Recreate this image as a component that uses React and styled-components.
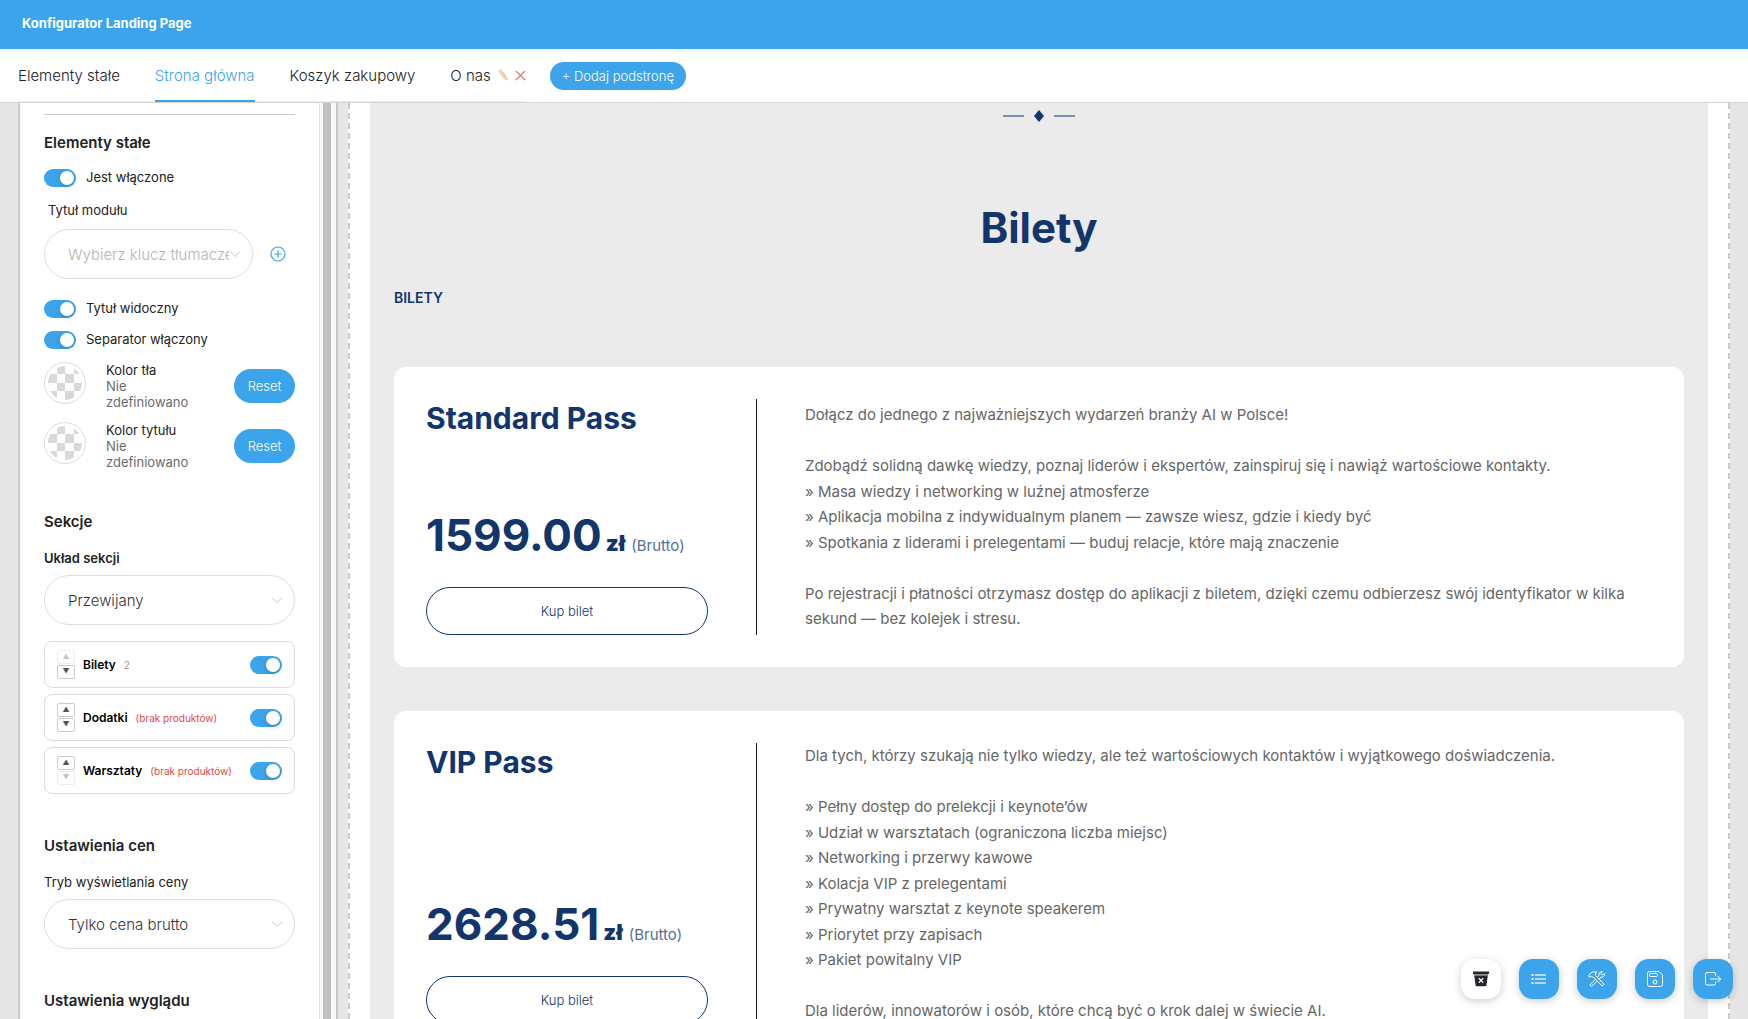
import React from 'react'
import styled, { createGlobalStyle, css } from 'styled-components'

const card1 = `Dołącz do jednego z najważniejszych wydarzeń branży AI w Polsce!

Zdobądź solidną dawkę wiedzy, poznaj liderów i ekspertów, zainspiruj się i nawiąż wartościowe kontakty.
» Masa wiedzy i networking w luźnej atmosferze
» Aplikacja mobilna z indywidualnym planem — zawsze wiesz, gdzie i kiedy być
» Spotkania z liderami i prelegentami — buduj relacje, które mają znaczenie

Po rejestracji i płatności otrzymasz dostęp do aplikacji z biletem, dzięki czemu odbierzesz swój identyfikator w kilka sekund — bez kolejek i stresu.`

const card2 = `Dla tych, którzy szukają nie tylko wiedzy, ale też wartościowych kontaktów i wyjątkowego doświadczenia.

» Pełny dostęp do prelekcji i keynote’ów
» Udział w warsztatach (ograniczona liczba miejsc)
» Networking i przerwy kawowe
» Kolacja VIP z prelegentami
» Prywatny warsztat z keynote speakerem
» Priorytet przy zapisach
» Pakiet powitalny VIP

Dla liderów, innowatorów i osób, które chcą być o krok dalej w świecie AI.`

const tickets = [
    { name: 'Standard Pass', price: '1599.00', text: card1 },
    { name: 'VIP Pass', price: '2628.51', text: card2 },
]

function Switch({ id, label }) {
    const [on, setOn] = React.useState(true)
    return <Toggle type="checkbox" role="switch" id={id} aria-label={label} checked={on} onChange={() => setOn(!on)} />
}

function SwitchRow({ id, label }) {
    return (
        <ToggleRow>
            <Switch id={id} />
            <label htmlFor={id}>{label}</label>
        </ToggleRow>
    )
}

function Dropdown({ id, value, muted }) {
    return (
        <SelectBox $muted={muted}>
            <select id={id} defaultValue={value}>
                <option>{value}</option>
            </select>
            <svg viewBox="0 0 12 8" fill="none" stroke="currentColor"><path d="M1 1.5l5 5 5-5" /></svg>
        </SelectBox>
    )
}

function ColorField({ label }) {
    return (
        <ColorRow>
            <Swatch type="button" aria-label={label}>
                <svg viewBox="0 0 34 34">
                    <defs>
                        <clipPath id="round"><circle cx="17" cy="17" r="17" /></clipPath>
                    </defs>
                    <g clipPath="url(#round)" fill="#d9d9d9">
                        <path d="M9 0h8v8H9zM26 0h8v8h-8zM0 8h9v9H0zM17 8h9v9h-9zM9 17h8v8H9zM26 17h8v8h-8zM0 25h9v9H0zM17 25h9v9h-9z" />
                    </g>
                </svg>
            </Swatch>
            <ColorText>
                {label}
                <span>Nie zdefiniowano</span>
            </ColorText>
            <ResetButton type="button">Reset</ResetButton>
        </ColorRow>
    )
}

function SectionRow({ name, note, error, first, last }) {
    return (
        <SortItem>
            <Arrows>
                <button type="button" disabled={first} aria-label="W górę">▲</button>
                <button type="button" disabled={last} aria-label="W dół">▼</button>
            </Arrows>
            <SortName>{name}</SortName>
            <SortNote $error={error}>{note}</SortNote>
            <Switch label={name} />
        </SortItem>
    )
}

export default function App() {
    return (
        <Page>
            <GlobalStyle />
            <Header>Konfigurator Landing Page</Header>
            <Nav>
                <TabList>
                    <Tab href="#stale">Elementy stałe</Tab>
                    <Tab href="#glowna" $active>Strona główna</Tab>
                    <Tab href="#koszyk">Koszyk zakupowy</Tab>
                    <TabGroup>
                        <Tab href="#onas">O nas</Tab>
                        <TabAction type="button" aria-label="Edytuj">
                            <svg width="10" height="12" viewBox="0 0 10 12" fill="#fbe3cc" stroke="#efb98c" strokeWidth=".8">
                                <path d="M.8 1.8L2.6.6 8.6 8l.6 3.2L6.4 9.6zM2.2 2.8l5 6.2M3.4 1.8l4.8 6.4" />
                            </svg>
                        </TabAction>
                        <TabAction type="button" aria-label="Usuń">
                            <svg width="11" height="11" viewBox="0 0 11 11" stroke="#e0675c" strokeWidth="1.2"><path d="M.8.8l9.4 9.4M10.2.8L.8 10.2" /></svg>
                        </TabAction>
                    </TabGroup>
                </TabList>
                <AddButton type="button">+ Dodaj podstronę</AddButton>
            </Nav>
            <Workspace>
                <Sidebar>
                    <Panel>
                        <Group>
                            <GroupTitle>Elementy stałe</GroupTitle>
                            <SwitchRow id="enabled" label="Jest włączone" />
                            <FieldLabel htmlFor="title" $inset>Tytuł modułu</FieldLabel>
                            <KeyRow>
                                <Dropdown id="title" value="Wybierz klucz tłumaczenia" muted />
                                <PlusButton type="button" aria-label="Dodaj klucz">
                                    <svg width="16" height="16" viewBox="0 0 16 16" fill="none" stroke="currentColor" strokeWidth="1.2"><circle cx="8" cy="8" r="7" /><path d="M8 4.5v7M4.5 8h7" /></svg>
                                </PlusButton>
                            </KeyRow>
                            <SwitchRow id="visible" label="Tytuł widoczny" />
                            <SwitchRow id="separator" label="Separator włączony" />
                            <ColorList>
                                <ColorField label="Kolor tła" />
                                <ColorField label="Kolor tytułu" />
                            </ColorList>
                        </Group>
                        <Group>
                            <GroupTitle>Sekcje</GroupTitle>
                            <FieldLabel htmlFor="layout" $bold>Układ sekcji</FieldLabel>
                            <Dropdown id="layout" value="Przewijany" />
                            <SortList>
                                <SectionRow name="Bilety" note="2" first />
                                <SectionRow name="Dodatki" note="(brak produktów)" error />
                                <SectionRow name="Warsztaty" note="(brak produktów)" error last />
                            </SortList>
                        </Group>
                        <Group>
                            <GroupTitle>Ustawienia cen</GroupTitle>
                            <FieldLabel htmlFor="price">Tryb wyświetlania ceny</FieldLabel>
                            <Dropdown id="price" value="Tylko cena brutto" />
                        </Group>
                        <Group>
                            <GroupTitle>Ustawienia wyglądu</GroupTitle>
                        </Group>
                    </Panel>
                    <Scrollbar><i /></Scrollbar>
                </Sidebar>
                <Preview>
                    <Module>
                        <Separator width="72" height="12" viewBox="0 0 72 12">
                            <path d="M0 6h21M51 6h21" stroke="#7b91b0" strokeWidth="2" />
                            <path d="M36 0l5 6-5 6-5-6z" fill="#12356b" />
                        </Separator>
                        <ModuleTitle>Bilety</ModuleTitle>
                        <SectionTitle>BILETY</SectionTitle>
                        {tickets.map((t) => (
                            <Ticket key={t.name}>
                                <TicketSide>
                                    <TicketName>{t.name}</TicketName>
                                    <div>
                                        <Price>{t.price}<b>zł</b><small>(Brutto)</small></Price>
                                        <BuyButton type="button">Kup bilet</BuyButton>
                                    </div>
                                </TicketSide>
                                <TicketText>{t.text}</TicketText>
                            </Ticket>
                        ))}
                    </Module>
                </Preview>
            </Workspace>
            <Dock>
                <DockButton type="button" aria-label="Archiwum" $light>
                    <svg width="16" height="16" viewBox="0 0 16 16">
                        <path d="M0 .5h16V3H0z" fill="#24282d" />
                        <path d="M1 3h14v1.5H1z" fill="#8d9093" />
                        <path d="M1.2 4.5h13.6l-1.4 10a1 1 0 0 1-1 .8H3.6a1 1 0 0 1-1-.8z" fill="#24282d" />
                        <path d="M5.8 7.2l4.4 4.4M10.2 7.2l-4.4 4.4" stroke="#fff" strokeWidth="1.3" />
                    </svg>
                </DockButton>
                <DockButton type="button" aria-label="Lista">
                    <svg width="16" height="16" viewBox="0 0 16 16" fill="none" stroke="currentColor">
                        <path d="M4 4h11M4 8h11M4 12h11" strokeWidth="1.3" opacity=".8" />
                        <path d="M.5 4h2M.5 8h2M.5 12h2" strokeWidth="2" />
                    </svg>
                </DockButton>
                <DockButton type="button" aria-label="Narzędzia">
                    <svg width="18" height="18" viewBox="0 0 18 18" fill="none" stroke="currentColor" strokeLinejoin="round">
                        <path d="M1 7L.8 5 4 2h5L7.2 4l.6 1.6 8.2 8.6-1.8 1.9L6 7.6 4.4 7 3.2 5.8 2.4 7z" />
                        <path d="M9.6 7.2L11 5.6c-.5-2 .8-4 3.2-4.2l-1.4 2L14.400 5l2.200-1.400c.4 2.400-1.600 4-3.800 3.600L11.400 9" />
                        <path d="M7.400 9.400l-5 4.800c-.8 1 .6 2.600 1.800 1.800L9 11.200" />
                    </svg>
                </DockButton>
                <DockButton type="button" aria-label="Zapisz">
                    <svg width="16" height="16" viewBox="0 0 16 16" fill="none" stroke="currentColor">
                        <path d="M2.5.5H12L15.500 4v9.500a2 2 0 0 1-2 2h-11a2 2 0 0 1-2-2v-11a2 2 0 0 1 2-2z" />
                        <rect x="2.5" y="2.5" width="8" height="3" rx="1" />
                        <circle cx="8" cy="11" r="2" />
                    </svg>
                </DockButton>
                <DockButton type="button" aria-label="Wyjdź">
                    <svg width="18" height="16" viewBox="0 0 18 16" fill="none" stroke="currentColor">
                        <path d="M11.5 5V3A1.500 1.500 0 0 0 10 1.500H3A1.500 1.500 0 0 0 1.500 3v9.500A1.500 1.500 0 0 0 3 14h7a1.500 1.500 0 0 0 1.500-1.500v-2M6 8h10.500M13.500 4.800L16.700 8l-3.200 3.200" />
                    </svg>
                </DockButton>
            </Dock>
        </Page>
    )
}

const GlobalStyle = createGlobalStyle`
    * {
        box-sizing: border-box;
    }
    body {
        margin: 0;
        background: #e6e6e6;
        color: #222;
        font-family: "Inter", sans-serif;
        font-size: 14px;
    }
    button, select, input {
        font: inherit;
        margin: 0;
    }
    button {
        padding: 0;
        border: none;
        background: none;
        cursor: pointer;
    }
    a {
        color: inherit;
        text-decoration: none;
    }
    h1, h2, h3, p {
        margin: 0;
    }
`;

const Page = styled.div`
    height: 100vh;
    display: flex;
    flex-direction: column;
    overflow: hidden;
`;

const Header = styled.header`
    height: 49px;
    padding: 14px 22px;
    flex-shrink: 0;
    background: #3ca4eb;
    color: #fff;
    font-weight: 700;
    font-size: 13px;
    line-height: 18px;
`;

const Nav = styled.nav`
    display: flex;
    align-items: center;
    gap: 24px;
    height: 54px;
    padding: 0 18px;
    flex-shrink: 0;
    background: #fff;
    border-bottom: 1px solid #d4d4d4;
`;

const TabList = styled.div`
    display: flex;
    align-self: stretch;
    gap: 35px;
    border-bottom: 1px solid #ececec;
`;

const Tab = styled.a`
    display: flex;
    align-items: center;
    height: 53px;
    padding-top: 2px;
    border-bottom: 2px solid transparent;
    font-size: 15px;
    font-weight: 300;
    ${({ $active }) => $active && css`
        color: #3ca4eb;
        border-color: #3ca4eb;
    `}
`;

const TabGroup = styled.div`
    display: flex;
    align-items: center;
    gap: 7px;
`;

const TabAction = styled.button`
    display: flex;
`;

const AddButton = styled.button`
    height: 28px;
    padding: 0 12px;
    border-radius: 14px;
    background: #3ca4eb;
    color: #fff;
    font-size: 13px;
    font-weight: 300;
`;

const Workspace = styled.div`
    flex: 1;
    min-height: 0;
    display: flex;
    gap: 10px;
    padding: 0 18px;
`;

const Sidebar = styled.aside`
    width: 320px;
    flex-shrink: 0;
    display: flex;
    border: solid #c8c8c8;
    border-width: 0 2px;
    background: #fff;
    overflow: hidden;
`;

const Panel = styled.div`
    flex: 1;
    min-width: 0;
    height: max-content;
    margin: 11px 24px 0;
    border-top: 1px solid #c8c8c8;
`;

const Scrollbar = styled.div`
    width: 17px;
    padding: 0 5px 0 3px;
    border-left: 1px solid #e4e4e4;
    background: #fafafa;
    i {
        display: block;
        height: 100%;
        background: #c0c0c0;
    }
`;

const Group = styled.section`
    padding: 16px 0 24px;
`;

const GroupTitle = styled.h2`
    margin-bottom: 14px;
    font-size: 15px;
    line-height: 24px;
    font-weight: 600;
`;

const ToggleRow = styled.div`
    display: flex;
    gap: 10px;
    height: 18px;
    margin-bottom: 13px;
    font-size: 13px;
    line-height: 16px;
`;

const Toggle = styled.input`
    appearance: none;
    width: 32px;
    height: 18px;
    padding: 2px;
    flex-shrink: 0;
    border-radius: 9px;
    background: #bbb;
    cursor: pointer;
    &::before {
        content: '';
        display: block;
        width: 14px;
        height: 14px;
        border-radius: 50%;
        background: #fff;
        box-shadow: 0 2px 4px rgba(0, 35, 11, 0.2);
    }
    &:checked {
        background: #3ca4eb;
    }
    &:checked::before {
        margin-left: auto;
    }
`;

const FieldLabel = styled.label`
    display: block;
    margin-bottom: 7px;
    padding-left: ${({ $inset }) => ($inset ? '4px' : '0')};
    font-size: 13px;
    line-height: 20px;
    font-weight: ${({ $bold }) => ($bold ? 600 : 400)};
`;

const KeyRow = styled.div`
    display: flex;
    align-items: center;
    gap: 17px;
    margin: 9px 0 21px;
`;

const PlusButton = styled.button`
    display: flex;
    margin-right: 9px;
    color: #3ca4eb;
`;

const SelectBox = styled.div`
    position: relative;
    flex: 1;
    min-width: 0;
    select {
        appearance: none;
        display: block;
        width: 100%;
        height: 50px;
        padding: 0 23px;
        border: 1px solid #dcdce4;
        border-radius: 25px;
        background: #fff;
        color: ${({ $muted }) => ($muted ? '#b4b4b4' : '#333')};
        font-size: 15px;
        font-weight: 300;
    }
    svg {
        position: absolute;
        right: 12px;
        top: 21px;
        width: 12px;
        height: 8px;
        color: #c4c4c4;
        pointer-events: none;
    }
`;

const ColorList = styled.div`
    display: grid;
    grid-auto-rows: 48px;
    gap: 12px;
`;

const ColorRow = styled.div`
    display: flex;
`;

const Swatch = styled.button`
    display: grid;
    place-items: center;
    width: 42px;
    height: 42px;
    flex-shrink: 0;
    border: 1px solid #dcdce4;
    border-radius: 50%;
    svg {
        width: 34px;
        height: 34px;
    }
`;

const ColorText = styled.div`
    flex: 1;
    padding: 0 36px 0 20px;
    font-size: 13px;
    line-height: 16px;
    span {
        display: block;
        color: #6b6b6b;
    }
`;

const ResetButton = styled.button`
    width: 61px;
    height: 34px;
    margin-top: 7px;
    border-radius: 17px;
    background: #3ca4eb;
    color: #fff;
    font-size: 13px;
    font-weight: 300;
`;

const SortList = styled.div`
    display: grid;
    gap: 6px;
    margin-top: 16px;
`;

const SortItem = styled.div`
    display: flex;
    align-items: center;
    height: 47px;
    padding: 0 12px;
    border: 1px solid #dcdcdc;
    border-radius: 8px;
    input {
        margin-left: auto;
    }
`;

const Arrows = styled.div`
    display: grid;
    gap: 1px;
    margin-right: 8px;
    button {
        width: 18px;
        height: 14px;
        border: 1px solid #ccc;
        border-radius: 2px;
        color: #555;
        font-size: 7px;
        line-height: 10px;
    }
    button:disabled {
        opacity: 0.35;
    }
`;

const SortName = styled.strong`
    color: #000;
    font-size: 12px;
    font-weight: 600;
`;

const SortNote = styled.span`
    margin-left: 8px;
    font-size: 10px;
    color: ${({ $error }) => ($error ? '#dc4a42' : '#999')};
`;

const Preview = styled.main`
    flex: 1;
    min-width: 0;
    padding: 0 20px;
    border: dashed #ccc;
    border-width: 0 2px;
    background: #fff;
`;

const Module = styled.div`
    display: flex;
    flex-direction: column;
    padding: 7px 24px 0;
    background: #ebebeb;
    color: #12356b;
`;

const Separator = styled.svg`
    align-self: center;
`;

const ModuleTitle = styled.h1`
    margin: 78px 0 32px;
    text-align: center;
    font-size: 42px;
    line-height: 56px;
    font-weight: 700;
`;

const SectionTitle = styled.h2`
    margin-bottom: 59px;
    font-size: 14px;
    line-height: 20px;
    font-weight: 600;
`;

const Ticket = styled.article`
    display: grid;
    grid-template-columns: 331px 1fr;
    margin-bottom: 44px;
    padding: 32px;
    border-radius: 12px;
    background: #fff;
`;

const TicketSide = styled.div`
    display: flex;
    flex-direction: column;
    justify-content: space-between;
    min-height: 236px;
    padding-right: 48px;
    border-right: 1px solid #1c1c1c;
`;

const TicketName = styled.h3`
    font-size: 30px;
    line-height: 38px;
    font-weight: 700;
`;

const Price = styled.p`
    margin-bottom: 16px;
    font-size: 44px;
    line-height: 50px;
    font-weight: 700;
    white-space: nowrap;
    b {
        margin: 0 6px 0 4px;
        font-size: 22px;
    }
    small {
        color: #556f99;
        font-size: 15px;
        font-weight: 400;
    }
`;

const BuyButton = styled.button`
    display: block;
    width: 100%;
    height: 48px;
    border: 1px solid #12356b;
    border-radius: 24px;
    color: #12356b;
    font-size: 13px;
    font-weight: 300;
`;

const TicketText = styled.p`
    align-self: center;
    padding-left: 48px;
    color: #666;
    font-size: 15px;
    line-height: 1.7;
    white-space: pre-line;
`;

const Dock = styled.div`
    position: fixed;
    right: 15px;
    bottom: 20px;
    display: flex;
    gap: 18px;
`;

const DockButton = styled.button`
    display: grid;
    place-items: center;
    width: 40px;
    height: 40px;
    border-radius: 14px;
    background: ${({ $light }) => ($light ? '#fff' : '#3ca4eb')};
    color: #fff;
    box-shadow: 0 2px 8px rgba(0, 0, 0, 0.2);
`;
